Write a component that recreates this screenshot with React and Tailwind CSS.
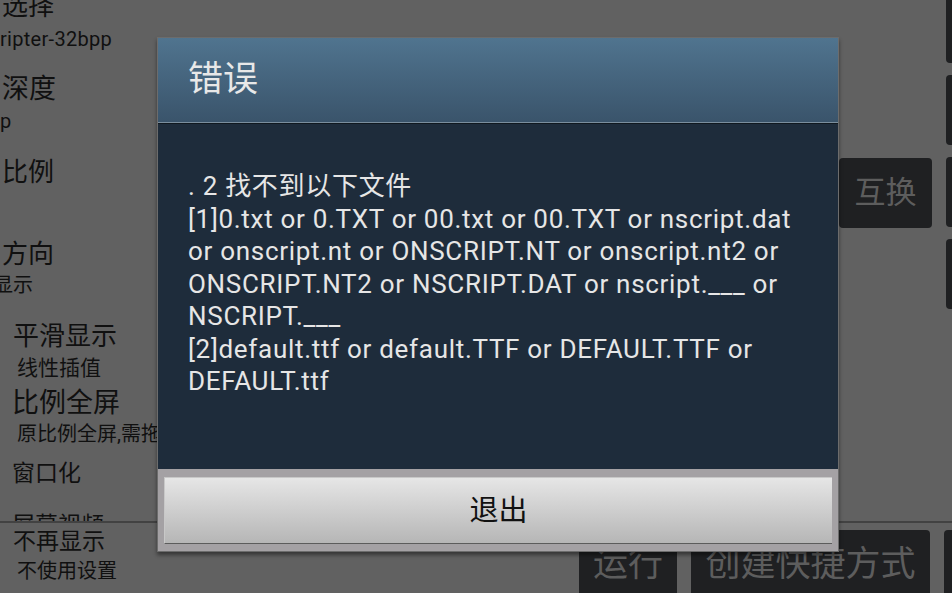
import React from "react";

const font = "font-['Roboto','Noto_Sans_CJK_SC',sans-serif]";

function DarkButton({ className = "", children }) {
  return (
    <div
      className={`shrink-0 rounded-[4px] bg-[#1f2022] text-[#5d5d5d] flex items-center justify-center whitespace-nowrap ${className}`}
    >
      {children}
    </div>
  );
}

const topItems = [
  { text: "选择", cls: "text-[26px] ml-[2px] -mt-[9px]" },
  { text: "ripter-32bpp", cls: "text-[20px] tracking-[0.3px] mt-[3px]" },
  { text: "深度", cls: "text-[27px] ml-[2px] mt-[20px]" },
  { text: "p", cls: "text-[20px] mt-[2px]" },
  { text: "比例", cls: "text-[26px] ml-[2px] mt-[21px]" },
  { text: "方向", cls: "text-[26px] ml-[2px] mt-[52px]" },
  { text: "显示", cls: "text-[20px] -ml-[7px] mt-[1px]" },
  { text: "平滑显示", cls: "text-[26px] ml-[13px] mt-[21px]" },
  { text: "线性插值", cls: "text-[21px] ml-[17px] mt-[2px]" },
  { text: "比例全屏", cls: "text-[27px] ml-[12px] mt-[5px]" },
  { text: "原比例全屏,需拖动调整", cls: "text-[20px] ml-[17px] mt-[1px]" },
  { text: "窗口化", cls: "text-[23px] ml-[12px] mt-[10px]" },
  { text: "屏幕视频", cls: "text-[23px] ml-[12px] mt-[22px]" },
];

const messageLines = [
  ". 2 找不到以下文件",
  "[1]0.txt or 0.TXT or 00.txt or 00.TXT or nscript.dat",
  "or onscript.nt or ONSCRIPT.NT or onscript.nt2 or",
  "ONSCRIPT.NT2 or NSCRIPT.DAT or nscript.___ or",
  "NSCRIPT.___",
  "[2]default.ttf or default.TTF or DEFAULT.TTF or",
  "DEFAULT.ttf",
];

export default function App() {
  return (
    <div className={`relative w-[952px] h-[593px] overflow-hidden bg-[#616161] text-[#101010] ${font}`}>

      {/* settings list + side buttons */}
      <div className="flex h-[521px] overflow-hidden">
        <div className="w-[839px] shrink-0 flex flex-col">
          {topItems.map((item) => (
            <div key={item.text} className={`leading-[30px] whitespace-nowrap ${item.cls}`}>
              {item.text}
            </div>
          ))}
        </div>
        <div className="w-[93px] shrink-0 pt-[158px]">
          <DarkButton className="h-[70px] text-[31px]">互换</DarkButton>
        </div>
        <div className="ml-[14px] w-[70px] shrink-0 flex flex-col gap-[12px] -mt-[7px]">
          <DarkButton className="h-[70px]" />
          <DarkButton className="h-[70px]" />
          <DarkButton className="h-[70px]" />
          <DarkButton className="h-[70px]" />
        </div>
      </div>

      <div className="h-[2px] bg-[#424242]" />

      {/* bottom bar */}
      <div className="flex">
        <div className="w-[579px] shrink-0 flex flex-col">
          <div className="text-[23px] leading-[30px] ml-[13px] mt-[4px]">不再显示</div>
          <div className="text-[20px] leading-[30px] ml-[17px] -mt-[1px]">不使用设置</div>
        </div>
        <div className="flex gap-[14px] pt-[7px]">
          <DarkButton className="w-[98px] h-[70px] text-[35px]">运行</DarkButton>
          <DarkButton className="w-[239px] h-[70px] text-[35px]">创建快捷方式</DarkButton>
          <DarkButton className="w-[70px] h-[70px]" />
        </div>
      </div>

      {/* error dialog */}
      <div className="absolute left-[157px] top-[37px] w-[682px] border border-[#6c6c6c] shadow-[0_3px_4px_rgba(0,0,0,0.45)]">
        <div className="h-[84px] bg-gradient-to-b from-[#50748f] to-[#3a546b] flex items-center pl-[30px] text-[35px] text-[#e8e8e8]">
          错误
        </div>
        <div className="h-px bg-[#7b8e9d]" />
        <div className="h-px bg-[#10181f]" />
        <div className="h-[345px] bg-[#1e2c3b] pl-[30px] pt-[46px] text-[26px] tracking-[0.7px] leading-[32.5px] text-[#e6e6e6]">
          {messageLines.map((line) => (
            <div key={line} className="whitespace-nowrap">{line}</div>
          ))}
        </div>
        <div className="bg-[#a4a1a4] px-[6px] pt-[8px] pb-[7px]">
          <div className="h-[67px] pt-[3px] bg-gradient-to-b from-[#e6e6e6] to-[#b6b6b6] border-l border-t border-[#c8c8c8] border-b border-b-[#5c5c5c] flex items-center justify-center text-[29px] text-[#111]">
            退出
          </div>
        </div>
      </div>
    </div>
  );
}
